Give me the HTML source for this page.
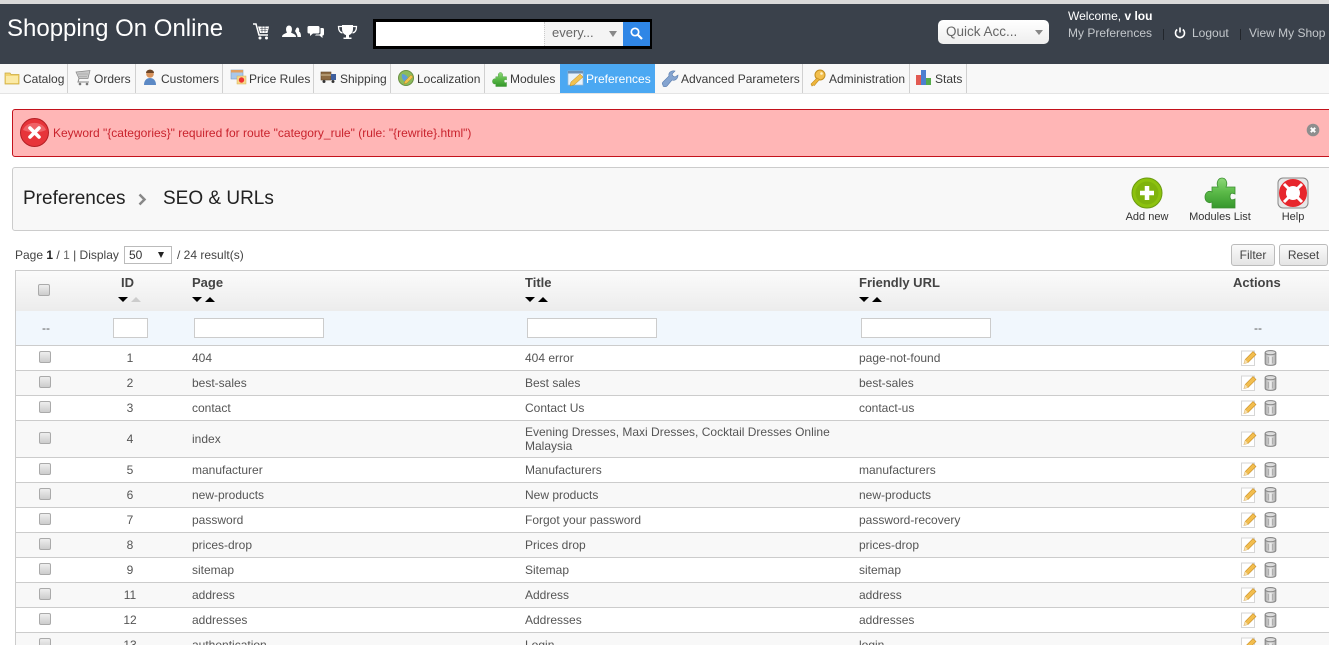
<!DOCTYPE html>
<html style="overflow:hidden;height:645px"><head><meta charset="utf-8"><style>
html,body{margin:0;padding:0;background:#fff}
body{width:1329px;height:645px;overflow:hidden;font:12px/14px "Liberation Sans",sans-serif;color:#555}
#w{position:absolute;left:0;top:0;width:1329px;height:645px;overflow:hidden}
.a,.t{position:absolute;white-space:nowrap}
.a{display:block}
.hd{left:0;top:4px;width:1329px;height:60px;background:#3a414b}
.nv{left:0;top:64px;width:1329px;height:29px;background:#f8f8f8;border-bottom:1px solid #e4e4e4}
.dv{top:64px;width:1px;height:29px;background:#d0d0d0}
.n{top:72px;color:#3a3a3a}
.r{left:16px;width:1313px;border-bottom:1px solid #ccc}
.cb{width:10px;height:10px;left:39px;border:1px solid #aaa;border-radius:2px;background:linear-gradient(#eee,#ccc)}
.id{left:110px;width:40px;text-align:center}
.c1{left:192px}.c2{left:525px}.c3{left:859px}
.hh{font-weight:bold;font-size:13px;color:#444;top:276px}
.fi{top:318px;height:18px;background:#fff;border:1px solid #ccc}
.up{width:0;height:0;border:5px solid transparent;border-top:0;border-bottom:5px solid #000;top:297px}
.dn{width:0;height:0;border:5px solid transparent;border-bottom:0;border-top:5px solid #000;top:297px}
.btn{top:244px;height:20px;border:1px solid #bbb;border-radius:3px;background:linear-gradient(#fafafa,#e4e4e4);text-align:center;line-height:20px;color:#444}
.tb{font-size:11px;color:#333;top:210px;text-align:center}
</style></head><body><div id="w">
<svg width="0" height="0" style="position:absolute"><defs>
<linearGradient id="gt" x1="0" y1="0" x2="1" y2="0"><stop offset="0" stop-color="#aaa"/><stop offset=".5" stop-color="#eee"/><stop offset="1" stop-color="#aaa"/></linearGradient>
<linearGradient id="gp" x1="0" y1="0" x2="0" y2="1"><stop offset="0" stop-color="#8ed878"/><stop offset=".45" stop-color="#5dbb4a"/><stop offset="1" stop-color="#35972b"/></linearGradient>
<symbol id="pz" viewBox="0 0 32 32"><path d="M8 10H14C12 6 14 1 18 1C22 1 24 6 22 10H31V17C27 15 26 17 26 19.500C26 22 27 24 31 22V31H8V25C4 27 1 24 1 20C1 16 4 13 8 15Z" fill="url(#gp)" stroke="#3b8f30" stroke-width=".8"/></symbol>
<symbol id="ed" viewBox="0 0 16 16"><rect x=".5" y="1" width="13" height="14.500" fill="#fff" stroke="#d6d6d6"/><path d="M3 13.500l1.200-4L12 1.500l3 3L7 12.500z" fill="#f2bd4e" stroke="#c98f26" stroke-width=".6"/><path d="M3 13.500l1.200-4 2.800 3z" fill="#f5dfb0"/></symbol>
<symbol id="tr" viewBox="0 0 12 15"><path d="M1 2.500v10c0 2.500 10 2.500 10 0v-10" fill="url(#gt)" stroke="#888"/><ellipse cx="6" cy="2.500" rx="5" ry="2" fill="#ddd" stroke="#888"/><path d="M4 6.500v6M8 6.500v6" stroke="#aaa"/></symbol>
</defs></svg>

<div class="a" style="left:0;top:0;width:1329px;height:4px;background:#d9d9d9"></div>
<div class="a hd"></div>
<div class="t" style="left:7px;top:15px;font-size:24px;line-height:28px;color:#fff">Shopping On Online</div>

<svg class="a" style="left:252px;top:22px" width="112" height="20" viewBox="0 0 112 20" fill="#fff">
<path d="M1 2h3l3 11h9" fill="none" stroke="#fff" stroke-width="1.500"/><path d="M6 4.500h11l-1.500 6.500H8z"/><path d="M8 6.500h8M8.500 8.500h7M10 4.500v6M13 4.500v6" stroke="#3a414b" stroke-width=".6"/><circle cx="8" cy="16" r="1.500"/><circle cx="14.500" cy="16" r="1.500"/>
<path d="M30 15c0-3 3-3 5-4.500-1.500-2-1.500-7 2-7s3.500 5 2 7c2 1.500 5 1.500 5 4.500zM43 9c1-1.500 1-3.500 2.500-3.500S47.500 8 47 9.500c1 .5 2 1.500 2 5.500h-3.500c0-2-1-3.500-2.500-6z"/>
<path d="M57 4h9c1 0 1.500.5 1.500 1.500V10c0 1-.5 1.500-1.500 1.500h-5L58 14v-2.500h-1c-1 0-1.500-.5-1.500-1.500V5.500C55.500 4.500 56 4 57 4z"/><path d="M68.500 6h2c1 0 1.500.5 1.500 1.500v4.500c0 1-.5 1.500-1.500 1.500V16l-3-2.500H63l1-1h3c1 0 1.500-.5 1.500-1.500z"/>
<path d="M90 3h11v4c0 3.500-2.500 6-4 6v2.500h2.500V17h-8v-1.500H94V13c-1.500 0-4-2.500-4-6z"/><path d="M90 4.500h-3.500c0 4 1.500 6 4 6.500M101 4.500h3.500c0 4-1.500 6-4 6.500" fill="none" stroke="#fff" stroke-width="1.300"/>
</svg>

<div class="a" style="left:373px;top:19px;width:273px;height:24px;border:3px solid #000;background:#fff"></div>
<div class="a" style="left:544px;top:22px;width:79px;height:24px;background:#f4f4f4;border-left:1px dotted #ccc"></div>
<div class="t" style="left:552px;top:26px;font-size:13px;color:#666">every...</div>
<div class="a" style="left:609px;top:31px;width:0;height:0;border:4px solid transparent;border-top:6px solid #888;border-bottom:0"></div>
<div class="a" style="left:623px;top:22px;width:27px;height:24px;background:#2f86e6"></div>
<svg class="a" style="left:629px;top:26px" width="15" height="15" viewBox="0 0 15 15"><circle cx="6" cy="6" r="3.700" fill="none" stroke="#fff" stroke-width="1.700"/><path d="M9 9l4 4" stroke="#fff" stroke-width="2.200"/></svg>

<div class="a" style="left:938px;top:20px;width:111px;height:24px;background:linear-gradient(#fff,#eee);border-radius:5px"></div>
<div class="t" style="left:946px;top:24px;font-size:13.500px;line-height:15px;color:#666">Quick Acc...</div>
<div class="a" style="left:1035px;top:30px;width:0;height:0;border:4px solid transparent;border-top:5px solid #888;border-bottom:0"></div>

<div class="t" style="left:1068px;top:9px;color:#fff">Welcome, <b>v lou</b></div>
<div class="t" style="left:1068px;top:26px;color:#c4c8cc">My Preferences</div>
<div class="a" style="left:1163px;top:29px;width:1px;height:11px;background:#22262c"></div>
<svg class="a" style="left:1173px;top:26px" width="14" height="14" viewBox="0 0 14 14"><path d="M4.200 3.500a4.500 4.500 0 1 0 5.600 0" fill="none" stroke="#fff" stroke-width="1.600"/><path d="M7 1.500v5" stroke="#fff" stroke-width="1.600"/></svg>
<div class="t" style="left:1192px;top:26px;color:#c4c8cc">Logout</div>
<div class="a" style="left:1240px;top:29px;width:1px;height:11px;background:#22262c"></div>
<div class="t" style="left:1249px;top:26px;color:#c4c8cc">View My Shop</div>

<div class="a nv"></div>
<div class="a" style="left:560px;top:64px;width:95px;height:29px;background:#4ba8f2"></div>
<div class="a dv" style="left:67px"></div><div class="a dv" style="left:135px"></div><div class="a dv" style="left:222px"></div><div class="a dv" style="left:313px"></div><div class="a dv" style="left:390px"></div><div class="a dv" style="left:484px"></div><div class="a dv" style="left:802px"></div><div class="a dv" style="left:909px"></div><div class="a dv" style="left:966px"></div>
<div class="t n" style="left:23px">Catalog</div>
<div class="t n" style="left:94px">Orders</div>
<div class="t n" style="left:161px">Customers</div>
<div class="t n" style="left:249px">Price Rules</div>
<div class="t n" style="left:340px">Shipping</div>
<div class="t n" style="left:417px">Localization</div>
<div class="t n" style="left:510px">Modules</div>
<div class="t n" style="left:586px;color:#fff">Preferences</div>
<div class="t n" style="left:681px">Advanced Parameters</div>
<div class="t n" style="left:829px">Administration</div>
<div class="t n" style="left:935px">Stats</div>

<svg class="a" style="left:0;top:64px" width="970" height="29" viewBox="0 0 970 29">
<path d="M5 9h5l1 1.500h8V20H5z" fill="#f3d572" stroke="#c9a83c" stroke-width=".7"/><rect x="6" y="12" width="12" height="7" fill="#fbeaa6"/>
<path d="M76 8l14-1.500-2 8H79z" fill="#c8c8c8" stroke="#888" stroke-width=".7"/><path d="M78 10h10M79 12.500h8" stroke="#999" stroke-width=".6"/><path d="M79 14.500l-1 3.500h11" fill="none" stroke="#888"/><circle cx="80" cy="20" r="1.300" fill="#777"/><circle cx="87" cy="20" r="1.300" fill="#777"/>
<circle cx="150" cy="10" r="3.800" fill="#d8935c"/><path d="M146 9c0-4.500 8-4.500 8 0z" fill="#6d4526"/><path d="M144 21c0-5 3-7 6-7s6 2 6 7z" fill="#5c89c5"/>
<rect x="231" y="6" width="12" height="9" fill="#a9c8ea" stroke="#7d9bc0" stroke-width=".6"/><rect x="231" y="6" width="12" height="2.500" fill="#e2a060"/><rect x="237" y="12" width="9" height="8" fill="#f7d98a" stroke="#d5ad55" stroke-width=".5"/><circle cx="241.500" cy="16" r="2.700" fill="#e33"/>
<rect x="321" y="8" width="10" height="8" fill="#8c6a42" stroke="#5d4528" stroke-width=".6"/><path d="M321 11h10" stroke="#d5c29c"/><rect x="331" y="10" width="5" height="6" fill="#3e5f9e"/><circle cx="324" cy="17.500" r="1.500" fill="#333"/><circle cx="333" cy="17.500" r="1.500" fill="#333"/>
<circle cx="406" cy="14" r="7.500" fill="#8cbb5c" stroke="#6b8f44"/><path d="M402 10c3 0 5 2 6 4l-3 4c-2-2-4-4-3-8z" fill="#5e9cd6"/><path d="M404 20l1-3 6-6 2 2-6 6z" fill="#f0c14b" stroke="#b98c22" stroke-width=".5"/>
<use href="#pz" x="492" y="8" width="15" height="15"/>
<rect x="568" y="7" width="15" height="14" fill="#e8f2fb" stroke="#9fb9d2" stroke-width=".7"/><rect x="568" y="7" width="15" height="2.500" fill="#6b8fb5"/><path d="M570 22l1-4 9-8 3 3-9 8z" fill="#f3c250" stroke="#b98c22" stroke-width=".5"/>
<path d="M663 21c-1-1-1-2 0-3l6-6c-1-3 2-6 6-5l-3 3 1 2 2 1 3-2c0 4-3 6-6 5l-5 6c-1 1-3 1-4 0z" fill="#84a4d0" stroke="#5b7eaf" stroke-width=".6"/>
<circle cx="820" cy="11" r="5" fill="#f2bf4e" stroke="#c28e1e"/><circle cx="821.500" cy="9.500" r="1.300" fill="#fff3c7"/><path d="M817 14l-6 6 1 2 1.500-1 1 .5 1.500-2 3.500-4z" fill="#eeb53c" stroke="#c28e1e" stroke-width=".6"/>
<rect x="916" y="11" width="5" height="10" fill="#e25a52"/><rect x="921" y="6" width="5" height="15" fill="#4c7fd0"/><rect x="926" y="14" width="5" height="7" fill="#55aa4a"/>
</svg>

<div class="a" style="left:12px;top:109px;width:1330px;height:46px;background:#ffb6b6;border:1px solid #c3121c;border-radius:3px"></div>
<svg class="a" style="left:20px;top:118px" width="30" height="30" viewBox="0 0 30 30"><circle cx="14.500" cy="14.500" r="14" fill="#e7343a" stroke="#b41f25"/><path d="M3 12a12 10 0 0 1 23 0c-6 3-16 3-23 0z" fill="#f2787c" opacity=".7"/><path d="M10 10l9 9M19 10l-9 9" stroke="#fff" stroke-width="3.600" stroke-linecap="round"/></svg>
<div class="t" style="left:53px;top:126px;color:#c9232d">Keyword "{categories}" required for route "category_rule" (rule: "{rewrite}.html")</div>
<svg class="a" style="left:1306px;top:123px" width="14" height="14" viewBox="0 0 14 14"><circle cx="7" cy="7" r="6.300" fill="#8e8e8e"/><path d="M4.800 4.800l4.400 4.400M9.200 4.800l-4.400 4.400" stroke="#fff" stroke-width="2"/></svg>

<div class="a" style="left:12px;top:167px;width:1330px;height:62px;background:#f8f8f8;border:1px solid #ccc;border-radius:3px"></div>
<div class="t" style="left:23px;top:188px;font-size:19px;line-height:22px;color:#222">Preferences</div>
<svg class="a" style="left:137px;top:193px" width="12" height="13" viewBox="0 0 12 13"><path d="M2.500 1.500l5 5-5 5" fill="none" stroke="#888" stroke-width="2.500"/></svg>
<div class="t" style="left:163px;top:188px;font-size:19px;line-height:22px;color:#222">SEO &amp; URLs</div>

<svg class="a" style="left:1131px;top:177px" width="32" height="32" viewBox="0 0 32 32"><circle cx="16" cy="16" r="15" fill="#8cc20e" stroke="#6a9a10"/><circle cx="16" cy="16" r="11.500" fill="#7fb30c"/><path d="M16 9v14M9 16h14" stroke="#fff" stroke-width="4.500"/></svg>
<div class="t tb" style="left:1117px;width:60px">Add new</div>
<svg class="a" style="left:1204px;top:177px" width="32" height="32" viewBox="0 0 32 32"><use href="#pz" x="0" y="0" width="32" height="32"/></svg>
<div class="t tb" style="left:1180px;width:80px">Modules List</div>
<svg class="a" style="left:1277px;top:177px" width="32" height="32" viewBox="0 0 32 32"><rect x="1" y="1" width="30" height="30" rx="5" fill="#e8e8e8" stroke="#888"/><circle cx="16" cy="16" r="10.500" fill="#fff" stroke="#e7262c" stroke-width="7"/><path d="M7 7l5 5M25 7l-5 5M7 25l5-5M25 25l-5-5" stroke="#fff" stroke-width="3"/></svg>
<div class="t tb" style="left:1263px;width:60px">Help</div>

<div class="t" style="left:15px;top:248px;color:#444">Page <b style="color:#222">1</b> / <span style="color:#666">1</span> | Display</div>
<div class="a" style="left:124px;top:246px;width:46px;height:16px;border:1px solid #bbb;background:#fff"></div>
<div class="t" style="left:129px;top:248px;color:#333">50</div>
<div class="a" style="left:158px;top:252px;width:0;height:0;border:3.500px solid transparent;border-top:6px solid #222;border-bottom:0"></div>
<div class="t" style="left:177px;top:248px;color:#444">/ 24 result(s)</div>
<div class="a btn" style="left:1231px;width:42px">Filter</div>
<div class="a btn" style="left:1279px;width:47px">Reset</div>

<div class="a" style="left:15px;top:270px;width:1314px;height:40px;border-top:1px solid #ccc;border-left:1px solid #ccc;background:linear-gradient(#fbfbfb,#ececec)"></div>
<div class="a" style="left:15px;top:311px;width:1313px;height:34px;border-left:1px solid #ccc;background:#f1f7fd;border-bottom:1px solid #ccc"></div>
<div class="a" style="left:15px;top:346px;width:1px;height:299px;background:#ccc"></div>

<div class="a cb" style="left:38px;top:284px"></div>
<div class="t hh" style="left:121px">ID</div>
<div class="a dn" style="left:118px"></div><div class="a up" style="left:131px;border-bottom-color:#ccc"></div>
<div class="t hh c1">Page</div><div class="a dn" style="left:192px"></div><div class="a up" style="left:205px"></div>
<div class="t hh c2">Title</div><div class="a dn" style="left:525px"></div><div class="a up" style="left:538px"></div>
<div class="t hh c3">Friendly URL</div><div class="a dn" style="left:859px"></div><div class="a up" style="left:872px"></div>
<div class="t hh" style="left:1233px">Actions</div>

<div class="t" style="left:42px;top:321px">--</div>
<div class="a fi" style="left:113px;width:33px"></div>
<div class="a fi" style="left:194px;width:128px"></div>
<div class="a fi" style="left:527px;width:128px"></div>
<div class="a fi" style="left:861px;width:128px"></div>
<div class="t" style="left:1254px;top:321px">--</div>

<div class="a r" style="top:346px;height:24px;background:#fff"></div>
<div class="a r" style="top:371px;height:24px;background:#f8f8f8"></div>
<div class="a r" style="top:396px;height:24px;background:#fff"></div>
<div class="a r" style="top:421px;height:36px;background:#f8f8f8"></div>
<div class="a r" style="top:458px;height:24px;background:#fff"></div>
<div class="a r" style="top:483px;height:24px;background:#f8f8f8"></div>
<div class="a r" style="top:508px;height:24px;background:#fff"></div>
<div class="a r" style="top:533px;height:24px;background:#f8f8f8"></div>
<div class="a r" style="top:558px;height:24px;background:#fff"></div>
<div class="a r" style="top:583px;height:24px;background:#f8f8f8"></div>
<div class="a r" style="top:608px;height:24px;background:#fff"></div>
<div class="a r" style="top:633px;height:24px;background:#f8f8f8"></div>

<div class="a cb" style="top:351px"></div><div class="t id" style="top:351px">1</div><div class="t c1" style="top:351px">404</div><div class="t c2" style="top:351px">404 error</div><div class="t c3" style="top:351px">page-not-found</div>
<div class="a cb" style="top:376px"></div><div class="t id" style="top:376px">2</div><div class="t c1" style="top:376px">best-sales</div><div class="t c2" style="top:376px">Best sales</div><div class="t c3" style="top:376px">best-sales</div>
<div class="a cb" style="top:401px"></div><div class="t id" style="top:401px">3</div><div class="t c1" style="top:401px">contact</div><div class="t c2" style="top:401px">Contact Us</div><div class="t c3" style="top:401px">contact-us</div>
<div class="a cb" style="top:432px"></div><div class="t id" style="top:432px">4</div><div class="t c1" style="top:432px">index</div><div class="t c2" style="top:425px">Evening Dresses, Maxi Dresses, Cocktail Dresses Online<br>Malaysia</div>
<div class="a cb" style="top:463px"></div><div class="t id" style="top:463px">5</div><div class="t c1" style="top:463px">manufacturer</div><div class="t c2" style="top:463px">Manufacturers</div><div class="t c3" style="top:463px">manufacturers</div>
<div class="a cb" style="top:488px"></div><div class="t id" style="top:488px">6</div><div class="t c1" style="top:488px">new-products</div><div class="t c2" style="top:488px">New products</div><div class="t c3" style="top:488px">new-products</div>
<div class="a cb" style="top:513px"></div><div class="t id" style="top:513px">7</div><div class="t c1" style="top:513px">password</div><div class="t c2" style="top:513px">Forgot your password</div><div class="t c3" style="top:513px">password-recovery</div>
<div class="a cb" style="top:538px"></div><div class="t id" style="top:538px">8</div><div class="t c1" style="top:538px">prices-drop</div><div class="t c2" style="top:538px">Prices drop</div><div class="t c3" style="top:538px">prices-drop</div>
<div class="a cb" style="top:563px"></div><div class="t id" style="top:563px">9</div><div class="t c1" style="top:563px">sitemap</div><div class="t c2" style="top:563px">Sitemap</div><div class="t c3" style="top:563px">sitemap</div>
<div class="a cb" style="top:588px"></div><div class="t id" style="top:588px">11</div><div class="t c1" style="top:588px">address</div><div class="t c2" style="top:588px">Address</div><div class="t c3" style="top:588px">address</div>
<div class="a cb" style="top:613px"></div><div class="t id" style="top:613px">12</div><div class="t c1" style="top:613px">addresses</div><div class="t c2" style="top:613px">Addresses</div><div class="t c3" style="top:613px">addresses</div>
<div class="a cb" style="top:638px"></div><div class="t id" style="top:638px">13</div><div class="t c1" style="top:638px">authentication</div><div class="t c2" style="top:638px">Login</div><div class="t c3" style="top:638px">login</div>

<svg class="a" style="left:1240px;top:346px" width="40" height="299" viewBox="0 0 40 299">
<use href="#ed" x="1" y="4" width="16" height="16"/><use href="#tr" x="24" y="4" width="13" height="16"/>
<use href="#ed" x="1" y="29" width="16" height="16"/><use href="#tr" x="24" y="29" width="13" height="16"/>
<use href="#ed" x="1" y="54" width="16" height="16"/><use href="#tr" x="24" y="54" width="13" height="16"/>
<use href="#ed" x="1" y="85" width="16" height="16"/><use href="#tr" x="24" y="85" width="13" height="16"/>
<use href="#ed" x="1" y="116" width="16" height="16"/><use href="#tr" x="24" y="116" width="13" height="16"/>
<use href="#ed" x="1" y="141" width="16" height="16"/><use href="#tr" x="24" y="141" width="13" height="16"/>
<use href="#ed" x="1" y="166" width="16" height="16"/><use href="#tr" x="24" y="166" width="13" height="16"/>
<use href="#ed" x="1" y="191" width="16" height="16"/><use href="#tr" x="24" y="191" width="13" height="16"/>
<use href="#ed" x="1" y="216" width="16" height="16"/><use href="#tr" x="24" y="216" width="13" height="16"/>
<use href="#ed" x="1" y="241" width="16" height="16"/><use href="#tr" x="24" y="241" width="13" height="16"/>
<use href="#ed" x="1" y="266" width="16" height="16"/><use href="#tr" x="24" y="266" width="13" height="16"/>
<use href="#ed" x="1" y="291" width="16" height="16"/><use href="#tr" x="24" y="291" width="13" height="16"/>
</svg>
</div></body></html>
